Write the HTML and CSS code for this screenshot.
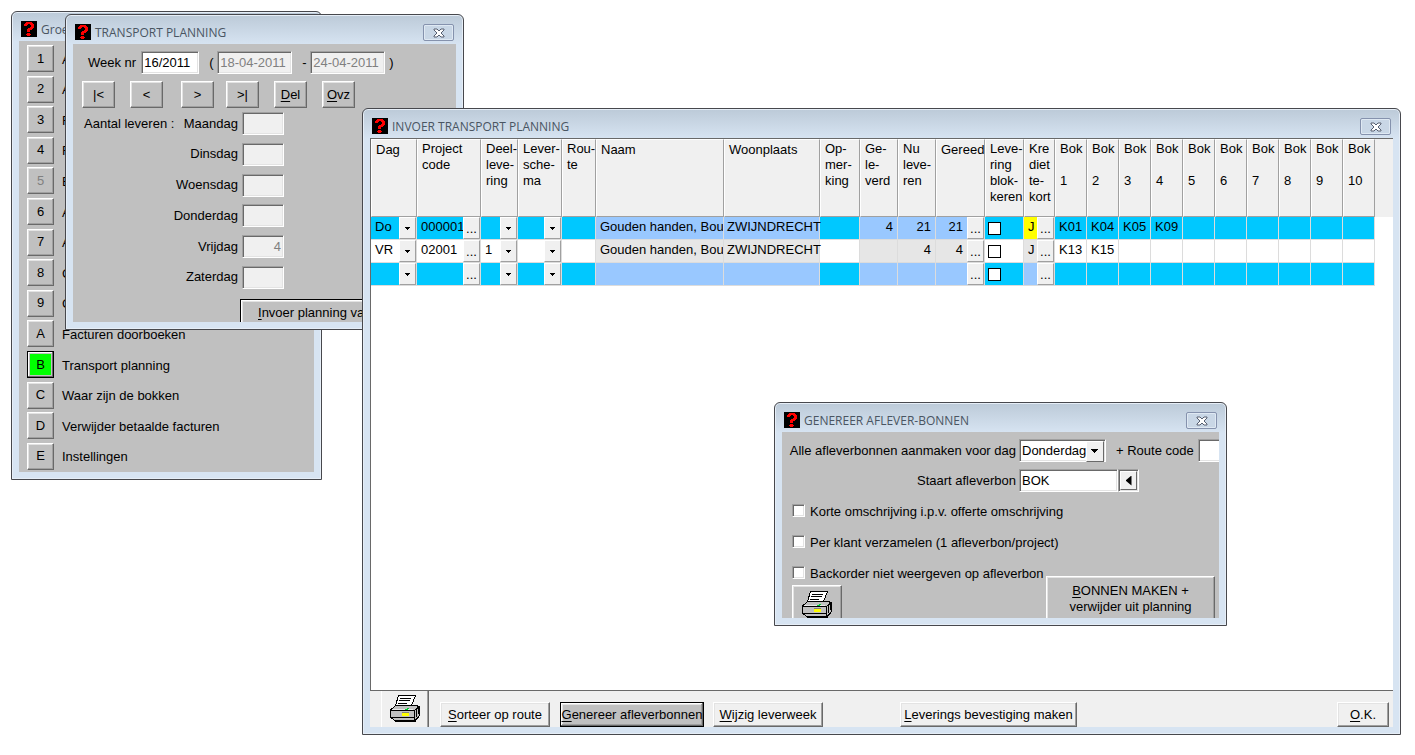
FILE: index.html
```html
<!DOCTYPE html>
<html lang="nl">
<head>
<meta charset="utf-8">
<title>Transport planning</title>
<link rel="stylesheet" href="styles.css">
</head>
<body>
<svg class="defs" aria-hidden="true">
  <symbol id="question" viewBox="0 0 16 16">
    <path fill="#000" d="M0 0h16v16H0z"/>
    <path fill="#f00" d="M5 1h6v1h1v1h1v4h-1v1h-1v1H9v2H6V8h1V7h2V6h1V4H9V3H7v1H6v1H3V3h1V2h1zM6 12h3v1h1v1H9v1H6v-1H5v-1h1z"/>
  </symbol>
  <symbol id="close" viewBox="0 0 12 10">
    <path d="M1 1h3l2 2 2-2h3v1L8 5l3 3v1H8L6 7 4 9H1V8l3-3-3-3z" fill="#fff" stroke="#565f70"/>
  </symbol>
  <symbol id="printer" viewBox="0 0 31 27">
    <path fill="#c0c0c0" stroke="#000" d="M5.500 10.500h20l4 1v9l-4 5.500h-20l-4-3-1-8z"/>
    <path fill="#c0c0c0" stroke="#000" d="M.5 15.500h24v7H.5zM24.500 15.500l5-4v9l-5 5z"/>
    <path fill="none" stroke="#e8e8e8" d="M2 14.500h21"/>
    <path fill="#fff" stroke="#000" d="M8.500.5h17l-4 10h-16z"/>
    <path fill="none" stroke="#000" d="M10 3.500h11M9 5.500h11M8 8.500h9M2 23.500l3 2h19M26.500 14.500v7M28.500 12.500v6"/>
    <path fill="#ff0" d="M12 18h7v3h-7z"/>
    <path fill="#808080" d="M12 17h7v1h-7z"/>
    <path fill="#0c3" d="M15 14h2v-1h2v1h-1v1h-3z"/>
  </symbol>
</svg>

<section class="window win-menu">
  <header class="titlebar"><svg class="qicon"><use href="#question"/></svg><h2>Groe</h2></header>
  <div class="client menu">
    <div class="item"><button class="btn key" id="k1">1</button><label for="k1">A</label></div>
    <div class="item"><button class="btn key" id="k2">2</button><label for="k2">A</label></div>
    <div class="item"><button class="btn key" id="k3">3</button><label for="k3">F</label></div>
    <div class="item"><button class="btn key" id="k4">4</button><label for="k4">F</label></div>
    <div class="item"><button class="btn key" id="k5" disabled>5</button><label for="k5">B</label></div>
    <div class="item"><button class="btn key" id="k6">6</button><label for="k6">A</label></div>
    <div class="item"><button class="btn key" id="k7">7</button><label for="k7">A</label></div>
    <div class="item"><button class="btn key" id="k8">8</button><label for="k8">G</label></div>
    <div class="item"><button class="btn key" id="k9">9</button><label for="k9">G</label></div>
    <div class="item"><button class="btn key" id="ka">A</button><label for="ka">Facturen doorboeken</label></div>
    <div class="item"><button class="btn key focus go" id="kb">B</button><label for="kb">Transport planning</label></div>
    <div class="item"><button class="btn key" id="kc">C</button><label for="kc">Waar zijn de bokken</label></div>
    <div class="item"><button class="btn key" id="kd">D</button><label for="kd">Verwijder betaalde facturen</label></div>
    <div class="item"><button class="btn key" id="ke">E</button><label for="ke">Instellingen</label></div>
  </div>
</section>

<section class="window win-week">
  <header class="titlebar"><svg class="qicon"><use href="#question"/></svg><h2>TRANSPORT PLANNING</h2><button class="close" aria-label="Sluiten"><svg><use href="#close"/></svg></button></header>
  <div class="client week">
    <div class="weekrow">
      <label for="weeknr">Week nr</label><input class="field weeknr" id="weeknr" value="16/2011">
      <span class="paren">(</span><input class="field date" aria-label="Van" value="18-04-2011" disabled>
      <span class="dash">-</span><input class="field date" aria-label="Tot" value="24-04-2011" disabled><span class="end">)</span>
    </div>
    <div class="navrow">
      <button class="btn nav">|&lt;</button><button class="btn nav">&lt;</button><button class="btn nav next">&gt;</button><button class="btn nav last">&gt;|</button><button class="btn nav"><u>D</u>el</button><button class="btn nav"><u>O</u>vz</button>
    </div>
    <div class="days">
      <span class="caption">Aantal leveren :</span>
      <div class="daylist">
        <div class="day"><label for="d1">Maandag</label><input class="field" id="d1" disabled></div>
        <div class="day"><label for="d2">Dinsdag</label><input class="field" id="d2" disabled></div>
        <div class="day"><label for="d3">Woensdag</label><input class="field" id="d3" disabled></div>
        <div class="day"><label for="d4">Donderdag</label><input class="field" id="d4" disabled></div>
        <div class="day"><label for="d5">Vrijdag</label><input class="field" id="d5" value="4" disabled></div>
        <div class="day"><label for="d6">Zaterdag</label><input class="field" id="d6" disabled></div>
      </div>
    </div>
    <button class="btn focus enter"><u>I</u>nvoer planning van</button>
  </div>
</section>

<section class="window win-grid">
  <header class="titlebar"><svg class="qicon"><use href="#question"/></svg><h2>INVOER TRANSPORT PLANNING</h2><button class="close" aria-label="Sluiten"><svg><use href="#close"/></svg></button></header>
  <div class="client planning">
    <div class="tablebox">
      <table>
        <colgroup><col class="c46"><col class="c64"><col class="c37"><col class="c44"><col class="c34"><col class="c128"><col class="c96"><col class="c40"><col class="c38"><col class="c38"><col class="c49"><col class="c39"><col class="c31"><col class="c32" span="10"><col></colgroup>
        <thead>
          <tr>
            <th class="one">Dag</th><th>Project<br>code</th><th>Deel-<br>leve-<br>ring</th><th>Lever-<br>sche-<br>ma</th><th>Rou-<br>te</th><th class="one">Naam</th><th class="one">Woonplaats</th><th>Op-<br>mer-<br>king</th><th>Ge-<br>le-<br>verd</th><th>Nu<br>leve-<br>ren</th><th class="one">Gereed</th><th>Leve-<br>ring<br>blok-<br>keren</th><th>Kre<br>diet<br>te-<br>kort</th><th>Bok<br><br>1</th><th>Bok<br><br>2</th><th>Bok<br><br>3</th><th>Bok<br><br>4</th><th>Bok<br><br>5</th><th>Bok<br><br>6</th><th>Bok<br><br>7</th><th>Bok<br><br>8</th><th>Bok<br><br>9</th><th>Bok<br><br>10</th><td class="filler"></td>
          </tr>
        </thead>
        <tbody>
          <tr class="sel">
            <td><div class="cell"><span>Do</span><button class="pick drop" aria-label="Kies dag"></button></div></td>
            <td><div class="cell"><span>000001</span><button class="pick">...</button></div></td>
            <td><div class="cell"><span></span><button class="pick drop" aria-label="Kies deellevering"></button></div></td>
            <td><div class="cell"><span></span><button class="pick drop" aria-label="Kies leverschema"></button></div></td>
            <td></td>
            <td class="ro"><div class="cell"><span>Gouden handen, Bouw</span></div></td>
            <td class="ro town"><div class="cell"><span>ZWIJNDRECHT</span></div></td>
            <td></td>
            <td class="ro num"><div class="cell"><span>4</span></div></td>
            <td class="ro num"><div class="cell"><span>21</span></div></td>
            <td class="ro num"><div class="cell"><span>21</span><button class="pick">...</button></div></td>
            <td><div class="cell"><input type="checkbox" class="block" aria-label="Levering blokkeren"></div></td>
            <td class="ro warn"><div class="cell"><span>J</span><button class="pick">...</button></div></td>
            <td><div class="cell"><span>K01</span></div></td><td><div class="cell"><span>K04</span></div></td><td><div class="cell"><span>K05</span></div></td><td><div class="cell"><span>K09</span></div></td><td></td><td></td><td></td><td></td><td></td><td></td><td class="rest"></td>
          </tr>
          <tr>
            <td><div class="cell"><span>VR</span><button class="pick drop" aria-label="Kies dag"></button></div></td>
            <td><div class="cell"><span>02001</span><button class="pick">...</button></div></td>
            <td><div class="cell"><span>1</span><button class="pick drop" aria-label="Kies deellevering"></button></div></td>
            <td><div class="cell"><span></span><button class="pick drop" aria-label="Kies leverschema"></button></div></td>
            <td></td>
            <td class="ro"><div class="cell"><span>Gouden handen, Bouw</span></div></td>
            <td class="ro town"><div class="cell"><span>ZWIJNDRECHT</span></div></td>
            <td></td>
            <td class="ro num"></td>
            <td class="ro num"><div class="cell"><span>4</span></div></td>
            <td class="ro num"><div class="cell"><span>4</span><button class="pick">...</button></div></td>
            <td><div class="cell"><input type="checkbox" class="block" aria-label="Levering blokkeren"></div></td>
            <td class="ro"><div class="cell"><span>J</span><button class="pick">...</button></div></td>
            <td><div class="cell"><span>K13</span></div></td><td><div class="cell"><span>K15</span></div></td><td></td><td></td><td></td><td></td><td></td><td></td><td></td><td></td><td class="rest"></td>
          </tr>
          <tr class="sel">
            <td><div class="cell"><span></span><button class="pick drop" aria-label="Kies dag"></button></div></td>
            <td><div class="cell"><span></span><button class="pick">...</button></div></td>
            <td><div class="cell"><span></span><button class="pick drop" aria-label="Kies deellevering"></button></div></td>
            <td><div class="cell"><span></span><button class="pick drop" aria-label="Kies leverschema"></button></div></td>
            <td></td><td class="ro"></td><td class="ro"></td><td></td><td class="ro"></td><td class="ro"></td>
            <td class="ro"><div class="cell"><span></span><button class="pick">...</button></div></td>
            <td><div class="cell"><input type="checkbox" class="block" aria-label="Levering blokkeren"></div></td>
            <td class="ro"><div class="cell"><span></span><button class="pick">...</button></div></td>
            <td></td><td></td><td></td><td></td><td></td><td></td><td></td><td></td><td></td><td></td><td class="rest"></td>
          </tr>
        </tbody>
      </table>
    </div>
    <footer class="actions">
      <button class="btn print" aria-label="Afdrukken"><svg><use href="#printer"/></svg></button>
      <button class="btn sort"><u>S</u>orteer op route</button>
      <button class="btn focus generate"><u>G</u>enereer afleverbonnen</button>
      <button class="btn change"><u>W</u>ijzig leverweek</button>
      <button class="btn confirm"><u>L</u>everings bevestiging maken</button>
      <button class="btn ok"><u>O</u>.K.</button>
    </footer>
  </div>
</section>

<section class="window win-notes">
  <header class="titlebar"><svg class="qicon"><use href="#question"/></svg><h2>GENEREER AFLEVER-BONNEN</h2><button class="close" aria-label="Sluiten"><svg><use href="#close"/></svg></button></header>
  <div class="client notes">
    <div class="formrow">
      <label class="lead" for="dag">Alle afleverbonnen aanmaken voor dag</label>
      <span class="field combo"><select id="dag"><option>Donderdag</option></select></span>
      <label class="route" for="route">+ Route code</label><input class="field routefield" id="route">
    </div>
    <div class="formrow">
      <label class="lead" for="staart">Staart afleverbon</label>
      <input class="field tail" id="staart" value="BOK"><span class="field arrowbox"><button class="pick back" aria-label="Kies staart"></button></span>
    </div>
    <div class="checks">
      <label><input type="checkbox">Korte omschrijving i.p.v. offerte omschrijving</label>
      <label><input type="checkbox">Per klant verzamelen (1 afleverbon/project)</label>
      <label><input type="checkbox">Backorder niet weergeven op afleverbon</label>
    </div>
    <div class="bottom">
      <button class="btn print" aria-label="Afdrukken"><svg><use href="#printer"/></svg></button>
      <button class="btn make"><u>B</u>ONNEN MAKEN +<br>verwijder uit planning</button>
    </div>
  </div>
</section>
</body>
</html>
```
FILE: styles.css
```css
* { box-sizing: border-box; }
body {
  margin: 0;
  height: 100vh;
  position: relative;
  overflow: hidden;
  background: #fff;
  color: #000;
  font: 13px/16px "Liberation Sans", Arial, sans-serif;
}
button, input, select { font: inherit; color: inherit; margin: 0; padding: 0; border-radius: 0; }
u { text-underline-offset: 2px; }
.defs { display: none; }

/* windows */
.window {
  position: absolute;
  display: flex;
  flex-direction: column;
  padding: 0 7px 7px;
  border: 1px solid #47484d;
  border-radius: 6px 6px 0 0;
  background: linear-gradient(#bccad8, #d7e4f2 30px);
  box-shadow: inset 0 0 0 1px #e6eef7;
}
.win-menu { left: 11px; top: 11px; width: 311px; height: 469px; }
.win-week { left: 65px; top: 14px; width: 399px; height: 316px; }
.win-grid { left: 362px; top: 108px; right: 14px; bottom: 20px; }
.win-notes { left: 774px; top: 402px; width: 453px; height: 224px; }
.titlebar {
  display: flex;
  align-items: flex-start;
  flex: none;
  height: 29px;
  padding: 9px 2px 0;
  gap: 4px;
}
.titlebar h2 {
  flex: 1;
  margin: 0;
  font: 12px/17px "Open Sans", "Noto Sans", sans-serif;
  color: #4a5562;
  white-space: nowrap;
}
.qicon { width: 16px; height: 16px; shape-rendering: crispEdges; }
.close {
  display: flex;
  align-items: center;
  justify-content: center;
  width: 31px;
  height: 17px;
  border: 1px solid #8592ad;
  border-radius: 2px;
  background: #c9d7e6;
  box-shadow: inset 0 0 0 1px #dfe9f3;
}
.close svg { width: 12px; height: 10px; }
.client { flex: 1; min-height: 0; overflow: hidden; background: #c0c0c0; }

/* shared controls */
.btn {
  background: #c0c0c0;
  border: 1px solid;
  border-color: #fff #696969 #696969 #fff;
  box-shadow: inset -1px -1px #a0a0a0, inset 1px 1px #e3e3e3;
  white-space: nowrap;
  text-align: center;
}
.btn:disabled { color: #808080; }
.btn.focus {
  border-color: #000;
  box-shadow: inset -1px -1px #696969, inset 1px 1px #fff, inset -2px -2px #a0a0a0, inset 2px 2px #e3e3e3;
}
.field {
  height: 23px;
  padding: 0 2px;
  border: 1px solid;
  border-color: #a0a0a0 #fff #fff #a0a0a0;
  background: #fff;
  box-shadow: inset 1px 1px #696969, inset -1px -1px #e3e3e3;
}
.field:disabled { background: #f0f0f0; color: #808080; }
.pick {
  border: 1px solid;
  border-color: #fff #a0a0a0 #a0a0a0 #fff;
  background: #f0f0f0;
}

/* menu */
.menu {
  display: flex;
  flex-direction: column;
  justify-content: space-between;
  padding: 4px 8px 2px;
}
.item { display: flex; align-items: center; gap: 8px; }
.item label { padding-top: 2px; }
.key { width: 27px; height: 27px; }
.key.go { background: #0f0; box-shadow: inset -1px -1px #696969, inset 1px 1px #fff, inset 0 0 0 2px #c0c0c0; }

/* week window */
.week { padding: 7px 9px 0; }
.weekrow { display: flex; align-items: center; padding-left: 6px; }
.weekrow .weeknr { width: 58px; margin-left: 5px; }
.weekrow .date { width: 75px; }
.paren { width: 18px; padding-left: 10px; }
.dash { width: 18px; padding-left: 10px; }
.end { padding-left: 4px; }
.navrow { display: flex; gap: 15px; margin-top: 7px; }
.nav { width: 33px; height: 27px; }
.nav.next { margin-left: 3px; }
.nav.last { margin-left: -3px; }
.days { display: flex; margin-top: 4px; }
.caption { flex: none; width: 92px; padding: 4px 0 0 2px; white-space: nowrap; }
.daylist {
  display: flex;
  flex-direction: column;
  justify-content: space-between;
  width: 110px;
  height: 177px;
}
.day { display: flex; align-items: center; justify-content: flex-end; gap: 4px; }
.day .field { width: 42px; text-align: right; }
.enter { margin: 10px 0 0 158px; padding-left: 17px; width: 180px; height: 27px; text-align: left; }

/* planning grid */
.planning { display: flex; flex-direction: column; background: #f0f0f0; }
.tablebox {
  flex: 1;
  min-height: 0;
  background: #fff;
  border: 1px solid #696969;
  border-right: 0;
}
table { width: 100%; table-layout: fixed; border-collapse: separate; border-spacing: 0; }
.c31 { width: 31px; } .c32 { width: 32px; } .c34 { width: 34px; } .c37 { width: 37px; }
.c38 { width: 38px; } .c39 { width: 39px; } .c40 { width: 40px; } .c44 { width: 44px; }
.c46 { width: 46px; } .c49 { width: 49px; } .c64 { width: 64px; } .c96 { width: 96px; }
.c128 { width: 128px; }
th {
  height: 78px;
  padding: 1px 0 0 4px;
  border: 1px solid;
  border-color: #fff #a0a0a0 #a0a0a0 #fff;
  background: #f0f0f0;
  font-weight: normal;
  text-align: left;
  vertical-align: top;
  white-space: nowrap;
}
th.one { padding-top: 2px; }
td { height: 23px; padding: 0; border: solid #dcdcdc; border-width: 0 1px 1px 0; background: #fff; }
td.ro { background: #e6e6e6; }
.sel td { background: #00c8ff; }
.sel td.ro { background: #99c8ff; }
.sel td.warn { background: #ff0; }
td.filler { border: 0; background: #f0f0f0; }
td.rest, .sel td.rest { border: 0; background: #fff; }
.cell { display: flex; height: 22px; overflow: hidden; }
.cell span { flex: 1; min-width: 0; padding-left: 4px; line-height: 19px; overflow: hidden; white-space: nowrap; }
.town .cell, .town span { overflow: visible; }
.town .cell span { padding-left: 3px; }
.num span { padding: 0 4px 0 0; text-align: right; }
.cell .pick { flex: none; width: 17px; height: 22px; line-height: 22px; }
.drop::before {
  content: "";
  display: block;
  margin: auto;
  width: 5px;
  height: 3px;
  background: linear-gradient(#000, #000) 0 0 / 5px 1px no-repeat,
    linear-gradient(#000, #000) 1px 1px / 3px 1px no-repeat,
    linear-gradient(#000, #000) 2px 2px / 1px 1px no-repeat;
}
.block {
  appearance: none;
  width: 13px;
  height: 13px;
  margin: 5px 3px;
  border: 1px solid #000;
  background: #fff;
}

/* planning actions */
.actions { display: flex; align-items: flex-end; flex: none; height: 36px; padding: 0 4px 0 11px; }
.actions .btn { height: 25px; background: #f0f0f0; }
.actions .print { width: 48px; height: 36px; padding-top: 2px; border-width: 0 1px 0 1px; box-shadow: inset -1px 0 #a0a0a0; }
.print svg { display: block; margin: 0 auto; width: 31px; height: 27px; shape-rendering: crispEdges; }
.actions .print svg { margin-bottom: 4px; }
.actions .sort { width: 110px; margin-left: 11px; }
.actions .generate { width: 144px; margin-left: 10px; background: #c0c0c0; }
.actions .change { width: 110px; margin-left: 9px; }
.actions .confirm { width: 177px; margin-left: 77px; }
.actions .ok { width: 52px; margin-left: auto; }

/* delivery notes */
.notes { display: flex; flex-direction: column; padding: 7px 0 0 10px; }
.formrow { display: flex; flex: none; align-items: center; height: 23px; margin: 0 0 7px -4px; }
.lead { flex: none; width: 228px; margin-right: 3px; text-align: right; white-space: nowrap; }
.combo { position: relative; flex: none; width: 87px; padding: 2px; }
.combo select { display: block; width: 100%; height: 17px; appearance: none; border: 0; background: #fff; }
.combo::after {
  content: "";
  position: absolute;
  top: 1px;
  right: 1px;
  width: 16px;
  height: 19px;
  background: linear-gradient(#000, #000) 4px 7px / 7px 1px no-repeat,
    linear-gradient(#000, #000) 5px 8px / 5px 1px no-repeat,
    linear-gradient(#000, #000) 6px 9px / 3px 1px no-repeat,
    linear-gradient(#000, #000) 7px 10px / 1px 1px no-repeat, #f0f0f0;
  border: 1px solid;
  border-color: #fff #696969 #696969 #fff;
  pointer-events: none;
}
.route { margin: 0 4px 0 10px; white-space: nowrap; }
.routefield { flex: none; width: 60px; }
.tail { width: 99px; }
.arrowbox { width: 21px; padding: 1px; }
.back { display: flex; align-items: center; justify-content: center; width: 17px; height: 19px; border-color: #fff #696969 #696969 #fff; }
.back::before { content: ""; width: 6px; height: 10px; background: #000; clip-path: polygon(100% 0, 100% 100%, 0 50%); }
.checks { display: flex; flex-direction: column; flex: none; gap: 15px; margin-top: 5px; }
.checks label { display: flex; align-items: flex-start; gap: 5px; }
.checks input {
  appearance: none;
  width: 13px;
  height: 13px;
  border: 1px solid;
  border-color: #a0a0a0 #fff #fff #a0a0a0;
  background: #fff;
  box-shadow: inset 1px 1px #696969, inset -1px -1px #e3e3e3;
}
.bottom { display: flex; flex: none; align-items: flex-start; justify-content: space-between; margin-top: -6px; padding-right: 4px; }
.bottom .print { width: 50px; height: 44px; margin-top: 9px; padding-bottom: 6px; }
.make { width: 169px; height: 53px; padding-bottom: 8px; }
```
